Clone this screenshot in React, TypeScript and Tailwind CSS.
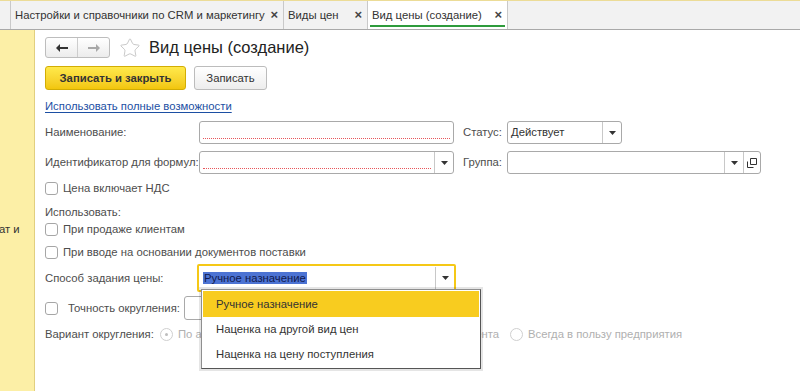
import { Star } from "lucide-react"

function Caret() {
  return (
    <svg width="7" height="4" viewBox="0 0 7 4">
      <path d="M0 0h7L3.5 4z" fill="#333" />
    </svg>
  )
}

function DropBtn({ h = 21 }: { h?: number }) {
  return (
    <div className="w-[19px] flex items-center justify-center border-l border-[#c8c8c8]" style={{ height: h }}>
      <Caret />
    </div>
  )
}

function Checkbox() {
  return <div className="w-[13px] h-[13px] rounded-[3px] border border-[#a6a6a6] bg-white shrink-0" />
}

function Radio({ checked }: { checked?: boolean }) {
  return (
    <div className="w-[13px] h-[13px] rounded-full border border-[#cfcfcf] bg-white flex items-center justify-center shrink-0">
      {checked && <div className="w-[3px] h-[3px] rounded-full bg-[#bdbdbd]" />}
    </div>
  )
}

function Tab({ title, w, active }: { title: string; w: number; active?: boolean }) {
  return (
    <div
      className={
        "relative h-full flex items-center pl-[4px] border-r border-[#c9c9c9] " +
        (active ? "bg-white" : "bg-[#f2f2f2]")
      }
      style={{ width: w }}
    >
      <span className="text-[11.3px] text-[#333] whitespace-nowrap">{title}</span>
      <span className="absolute right-[5px] top-[7px] text-[13px] font-bold text-[#444] leading-none">×</span>
      {active && <div className="absolute left-[2px] right-[2px] bottom-[2px] h-[2px] bg-[#2e9b3c]" />}
    </div>
  )
}

export default function App() {
  return (
    <div className="w-[800px] h-[391px] overflow-hidden bg-white font-['Liberation_Sans',Arial,sans-serif] text-[11.3px] text-[#4d4d4d] flex flex-col whitespace-nowrap">
      {/* tabs */}
      <div className="h-[30px] shrink-0 flex bg-[#f2f2f2] border-t border-[#ecdc97] border-b border-b-[#a9a9a9]">
        <div className="w-[11px] h-full border-r border-[#c9c9c9]" />
        <Tab title="Настройки и справочники по CRM и маркетингу" w={273} />
        <Tab title="Виды цен" w={84} />
        <Tab title="Вид цены (создание)" w={140} active />
      </div>

      <div className="flex flex-1">
        {/* section panel */}
        <div className="w-[35px] shrink-0 bg-[#fcefa6] border-r border-[#e1cf7f] pt-[191px]">
          <div className="text-[11.3px] text-[#333] -ml-[1px]">ат и</div>
        </div>

        <div className="relative flex-1 pl-[10px]">
          {/* nav + title */}
          <div className="h-[21px] mt-[7px] flex items-center">
            <div className="flex h-[21px] w-[65px] rounded-[3px] border border-[#bdbdbd] bg-gradient-to-b from-white to-[#ececec]">
              <div className="w-[32px] flex items-center justify-center border-r border-[#cdcdcd]">
                <svg width="12" height="8" viewBox="0 0 12 8">
                  <path d="M0 4l4-4v3h8v2H4v3z" fill="#333" />
                </svg>
              </div>
              <div className="flex-1 flex items-center justify-center">
                <svg width="12" height="8" viewBox="0 0 12 8">
                  <path d="M12 4L8 0v3H0v2h8v3z" fill="#a8a8a8" />
                </svg>
              </div>
            </div>
            <Star className="ml-[9px] w-[22px] h-[22px] text-[#c4c4c4]" strokeWidth={1} />
            <div className="ml-[8px] text-[16.5px] text-[#222] leading-none">Вид цены (создание)</div>
          </div>

          {/* buttons */}
          <div className="flex mt-[8px] gap-[8px]">
            <div className="h-[24px] w-[141px] rounded-[3px] border border-[#d2ad04] bg-gradient-to-b from-[#ffe94a] to-[#f2c60a] flex items-center justify-center text-[11.3px] font-bold text-[#333]">
              Записать и закрыть
            </div>
            <div className="h-[24px] w-[73px] rounded-[3px] border border-[#bcbcbc] bg-gradient-to-b from-white to-[#ededed] flex items-center justify-center text-[11.3px] text-[#333]">
              Записать
            </div>
          </div>

          {/* link */}
          <div className="mt-[10px] h-[13px] leading-[13px] text-[#1c4fa3] underline underline-offset-[2px]">
            Использовать полные возможности
          </div>

          {/* name row */}
          <div className="mt-[8px] flex items-center h-[23px]">
            <div className="w-[154px]">Наименование:</div>
            <div className="w-[255px] h-[23px] rounded-[3px] border border-[#a9a9a9] bg-white px-[3px] pt-[16px]">
              <div className="border-b border-dotted border-[#e8565b]" />
            </div>
            <div className="ml-[9px] w-[44px]">Статус:</div>
            <div className="w-[115px] h-[23px] rounded-[3px] border border-[#a9a9a9] bg-white flex items-center">
              <div className="flex-1 pl-[3px] text-[#333]">Действует</div>
              <DropBtn />
            </div>
          </div>

          {/* formula id row */}
          <div className="mt-[7px] flex items-center h-[23px]">
            <div className="w-[154px]">Идентификатор для формул:</div>
            <div className="w-[255px] h-[23px] rounded-[3px] border border-[#a9a9a9] bg-white flex">
              <div className="flex-1 px-[3px] pt-[16px]">
                <div className="border-b border-dotted border-[#e8565b]" />
              </div>
              <DropBtn />
            </div>
            <div className="ml-[9px] w-[44px]">Группа:</div>
            <div className="w-[254px] h-[23px] rounded-[3px] border border-[#a9a9a9] bg-white flex items-center">
              <div className="flex-1" />
              <DropBtn />
              <div className="w-[17px] h-[21px] border-l border-[#c8c8c8] flex items-center justify-center">
                <svg width="10" height="10" viewBox="0 0 10 10">
                  <path d="M3.5 0.5h6v6h-6z M0.5 3.5v6h6" fill="none" stroke="#333" strokeWidth="1" />
                </svg>
              </div>
            </div>
          </div>

          {/* vat */}
          <div className="mt-[8px] flex items-center h-[13px] gap-[5px]">
            <Checkbox />
            <span>Цена включает НДС</span>
          </div>

          <div className="mt-[11px] h-[13px] leading-[13px]">Использовать:</div>

          <div className="mt-[4px] flex items-center h-[13px] gap-[5px]">
            <Checkbox />
            <span>При продаже клиентам</span>
          </div>
          <div className="mt-[10px] flex items-center h-[13px] gap-[5px]">
            <Checkbox />
            <span>При вводе на основании документов поставки</span>
          </div>

          {/* method */}
          <div className="mt-[5px] flex items-center h-[28px]">
            <div className="w-[152px]">Способ задания цены:</div>
            <div className="w-[259px] h-[28px] rounded-[2px] border-2 border-[#f5c816] bg-white flex items-center">
              <div className="flex-1 pl-[4px]">
                <span className="bg-[#4c73d3] text-[#101a50] px-[1px]">Ручное назначение</span>
              </div>
              <DropBtn h={22} />
            </div>
          </div>

          {/* rounding */}
          <div className="mt-[4px] flex items-center h-[24px]">
            <Checkbox />
            <span className="ml-[10px] w-[116px]">Точность округления:</span>
            <div className="w-[60px] h-[24px] rounded-[3px] border border-[#a9a9a9] bg-white" />
          </div>

          <div className="mt-[7px] flex items-center h-[14px]">
            <span className="w-[115px]">Вариант округления:</span>
            <div className="w-[339px] flex items-center justify-between text-[#b0b0b0]">
              <div className="flex items-center gap-[5px]">
                <Radio checked />
                <span>По арифметическим правилам</span>
              </div>
              <div className="flex items-center gap-[5px]">
                <Radio />
                <span>В пользу клиента</span>
              </div>
            </div>
            <div className="ml-[11px] flex items-center gap-[5px] text-[#b0b0b0]">
              <Radio />
              <span>Всегда в пользу предприятия</span>
            </div>
          </div>

          {/* popup list */}
          <div className="absolute left-[166px] top-[259px] w-[280px] bg-white border border-[#8f8f8f] border-r-[#555] border-b-[#555] shadow-[0_0_0_2px_rgba(0,0,0,0.1)] p-[1px] text-[11.3px] text-[#333]">
            <div className="h-[26px] bg-[#f8cc1f] flex items-center pl-[13px]">Ручное назначение</div>
            <div className="h-[25px] flex items-center pl-[13px]">Наценка на другой вид цен</div>
            <div className="h-[25px] flex items-center pl-[13px]">Наценка на цену поступления</div>
          </div>
        </div>
      </div>
    </div>
  )
}
